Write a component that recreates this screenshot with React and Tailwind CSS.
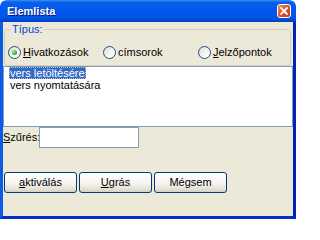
import React from "react";

const Radio = ({ checked, children }) => (
  <div className="flex items-center gap-[2px]">
    <span className="flex h-[13px] w-[13px] items-center justify-center rounded-full border border-[#1C5180] bg-[linear-gradient(135deg,#DCDCD7_0%,#F6F6F3_60%,#FFFFFF_100%)]">
      {checked && (
        <span className="h-[5px] w-[5px] rounded-full bg-[radial-gradient(circle_at_35%_35%,#B8F0A0_0%,#3FBF3F_45%,#1E8F1E_100%)]" />
      )}
    </span>
    <span>{children}</span>
  </div>
);

const Button = ({ children }) => (
  <button className="flex h-[21px] w-[73px] items-center justify-center rounded-[3px] border border-[#003C74] bg-[linear-gradient(to_bottom,#FFFFFF_0%,#F5F4EF_55%,#E3E0D6_85%,#D6D0C5_100%)] text-[11px] leading-none text-black">
    {children}
  </button>
);

export default function App() {
  return (
    <div className="flex h-[219px] w-[296px] flex-col overflow-hidden rounded-t-[6px] bg-white font-['Liberation_Sans',Arial,sans-serif] text-[11px] text-black">
      {/* TITLE BAR */}
      <div className="flex h-[22px] shrink-0 items-center justify-between rounded-t-[6px] bg-[linear-gradient(to_bottom,#3D8DF5_0%,#0A60EA_10%,#0058EE_45%,#0055E6_80%,#0041C8_100%)] pl-[7px] pr-[5px]">
        <span className="text-[11px] font-bold leading-none text-white [text-shadow:1px_1px_#0A1883]">
          Elemlista
        </span>
        <div className="flex h-[14px] w-[14px] items-center justify-center rounded-[3px] border border-white bg-[linear-gradient(135deg,#F0946F_0%,#E0522E_45%,#C4381A_100%)]">
          <svg width="8" height="8" viewBox="0 0 8 8">
            <path d="M1 1 L7 7 M7 1 L1 7" stroke="white" strokeWidth="1.8" strokeLinecap="square" />
          </svg>
        </div>
      </div>

      {/* BODY */}
      <div className="flex flex-1 flex-col border-b-[3px] border-l-[3px] border-r-[3px] border-b-[#0030C8] border-l-[#0B5BE5] border-r-[#0024B8] bg-[#ECE9D8]">
        {/* GROUP BOX */}
        <div className="relative ml-[1px] mr-[2px] mt-[7px] h-[37px] rounded-[3px] border border-[#D0D0BF] pl-[3px] pt-[14px]">
          <span className="absolute -top-[7px] left-[6px] bg-[#ECE9D8] px-[1px] leading-[13px] text-[#0046D5]">
            Típus:
          </span>
          <div className="grid grid-cols-[95px_95px_auto]">
            <Radio checked>
              <span className="underline">H</span>ivatkozások
            </Radio>
            <Radio>címsorok</Radio>
            <Radio>
              <span className="underline">J</span>elzőpontok
            </Radio>
          </div>
        </div>

        {/* LIST */}
        <div className="h-[61px] border border-[#7F9DB9] bg-white pl-[5px]">
          <div className="w-fit bg-[#316AC5] px-[1px] leading-[12px] text-white outline outline-1 outline-dotted outline-[#C0C0C0] -outline-offset-1">
            vers letöltésére
          </div>
          <div className="px-[1px] leading-[13px]">vers nyomtatására</div>
        </div>

        {/* FILTER */}
        <div className="flex h-[21px] items-center">
          <span className="w-[36px]">
            <span className="underline">S</span>zűrés:
          </span>
          <div className="h-[21px] w-[100px] border border-[#7F9DB9] bg-white" />
        </div>

        {/* BUTTONS */}
        <div className="ml-[1px] mt-[24px] flex gap-[2px]">
          <Button>
            <span className="underline">a</span>ktiválás
          </Button>
          <Button>
            <span className="underline">U</span>grás
          </Button>
          <Button>Mégsem</Button>
        </div>
      </div>
    </div>
  );
}
